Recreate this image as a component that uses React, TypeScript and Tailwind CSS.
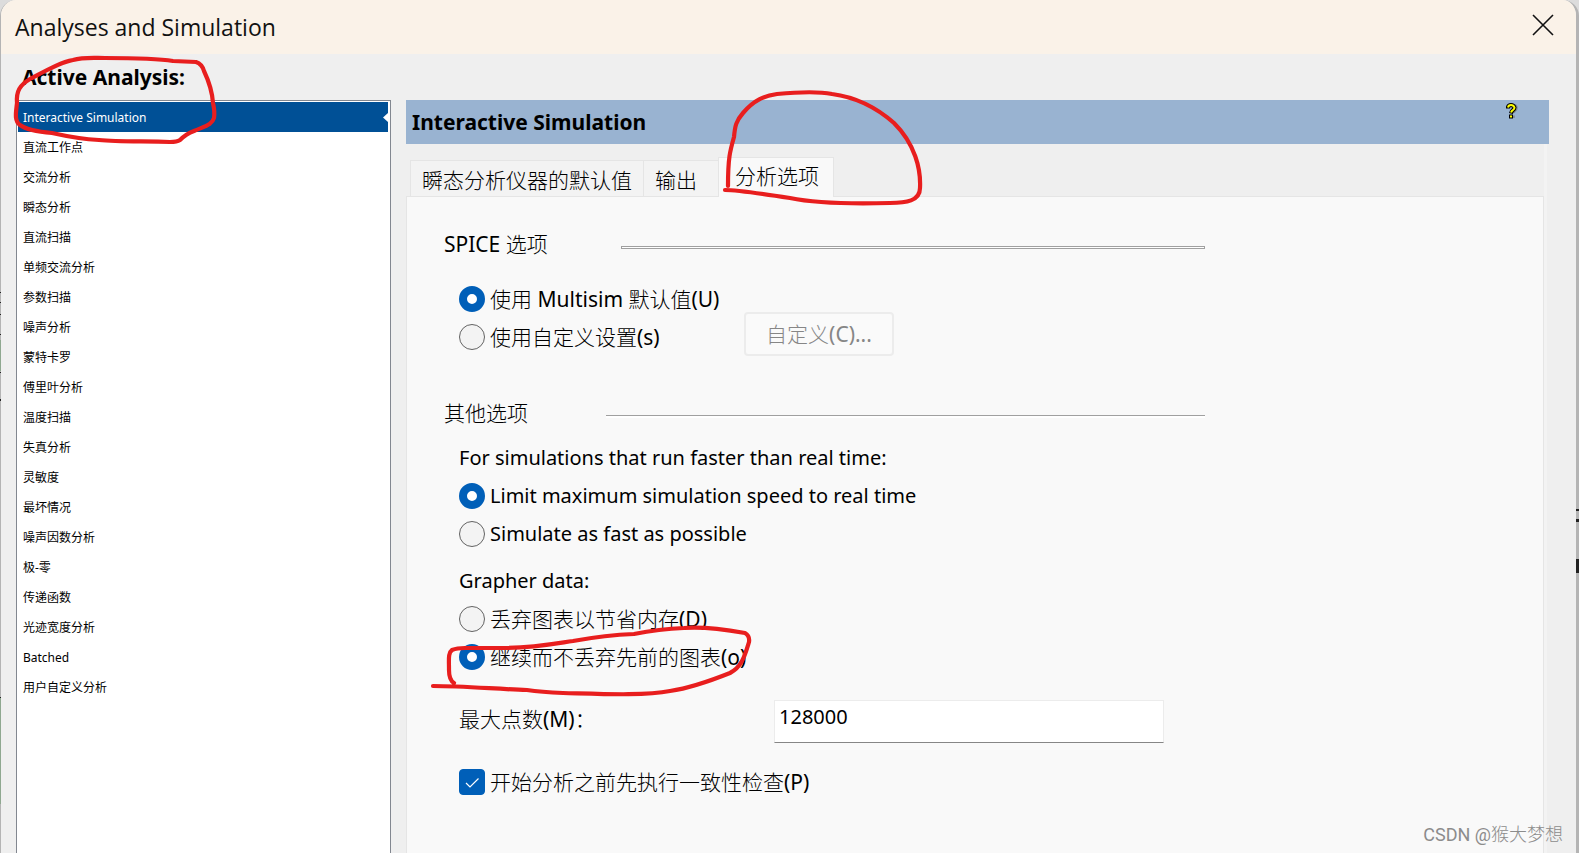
import { useState } from 'react';

const ANALYSES = [
  'Interactive Simulation',
  '直流工作点',
  '交流分析',
  '瞬态分析',
  '直流扫描',
  '单频交流分析',
  '参数扫描',
  '噪声分析',
  '蒙特卡罗',
  '傅里叶分析',
  '温度扫描',
  '失真分析',
  '灵敏度',
  '最坏情况',
  '噪声因数分析',
  '极-零',
  '传递函数',
  '光迹宽度分析',
  'Batched',
  '用户自定义分析'
];

const TABS = ['瞬态分析仪器的默认值', '输出', '分析选项'];

function RadioRow({
  name,
  label,
  checked,
  onSelect
}: {
  name: string;
  label: string;
  checked: boolean;
  onSelect: () => void;
}) {
  return (
    <label className="flex h-[38px] items-center gap-[5px] whitespace-nowrap">
      <input
        type="radio"
        name={name}
        checked={checked}
        onChange={onSelect}
        className="h-[26px] w-[26px] shrink-0 appearance-none rounded-full border border-[#636363] bg-[#f3f3f3] checked:border-8 checked:border-[#005fb8] checked:bg-white"
      />
      {label}
    </label>
  );
}

function HelpIcon() {
  return (
    <svg width="12" height="16" viewBox="0 0 12 16" fill="none" aria-hidden="true">
      <path d="M3 5V4Q3 2.5 6 2.5T9 5Q9 6.5 7.5 7.5T6 10M6 12.5V15" transform="translate(1 0)" stroke="#7d8790" strokeWidth="3.5" />
      <path d="M2 5.5V4Q2.500 2 5 2T8.500 4.500Q8.500 6 7 7T5 10.500M5 11.500V15.500" stroke="#000" strokeWidth="4" />
      <path d="M2 4.500Q2.500 2 5 2T8.500 4.500Q8.500 6 7 7T5 9.500M5 12.500V14.500" stroke="#ffff00" strokeWidth="2" />
    </svg>
  );
}

function PenMarks() {
  return (
    <svg
      className="pointer-events-none absolute left-0 top-0 h-[853px] w-[1579px]"
      viewBox="0 0 1579 853"
      fill="none"
      stroke="#e81e1e"
      strokeWidth="4.2"
      strokeLinecap="round"
      strokeLinejoin="round"
      aria-hidden="true"
    >
      <path d="M17 103C16 91 20 85 30 79C47 70 61 62 73 60C83 57 93 58 105 58C130 58 155 58 173 61L196 62Q202 64 204 71Q212 88 213 103Q215 112 214 118C212 125 205 126 194 131Q186 134 180 140Q177 142 170 142C147 141 119 142 99 140Q79 139 52 133Q28 131 20 125C14 121 16 112 17 103Z" />
      <path d="M728 186C728 158 730 151 734 137C735 126 736 121 743 113C754 100 764 96 777 94C798 92 817 91 832 94C855 97 877 108 894 123C915 144 921 169 920 188C920 201 906 203 890 203C854 204 814 203 790 198Q738 190 725 190" />
      <path d="M454 683Q449 680 449 670C449 659 448 653 452 650Q457 648 465 648L503 648C533 648 553 644 573 641Q606 635 634 634Q659 629 684 628C705 626 728 630 745 633Q750 636 749 642C745 655 742 667 730 673C710 681 690 688 670 691C645 696 602 694 563 693Q541 692 527 690C496 689 463 686 433 686" />
    </svg>
  );
}

// bits of the windows behind the dialog that peek out at its edges
function EdgeMarks() {
  return (
    <>
      <svg className="absolute left-0 top-0 h-[853px] w-px" viewBox="0 0 1 853" aria-hidden="true">
        <path d="M0 292h1v1H0zM0 302h1v1H0zM0 314h1v1H0zM0 334h1v1H0zM0 372h1v1H0zM0 399h1v2H0zM0 697h1v1H0z" fill="#222" />
        <path d="M0 340h1v31H0zM0 698h1v106H0z" fill="#8fa890" />
      </svg>
      <svg className="absolute right-0 top-0 h-[853px] w-[3px]" viewBox="0 0 3 853" aria-hidden="true">
        <path d="M0 509h3v2H0zM0 519h3v3H0zM0 559h3v14H0z" fill="#222" />
      </svg>
    </>
  );
}

export default function App() {
  const [analysis, setAnalysis] = useState(0);
  const [tab, setTab] = useState(2);
  const [spice, setSpice] = useState(0);
  const [speed, setSpeed] = useState(0);
  const [grapher, setGrapher] = useState(1);
  const [points, setPoints] = useState('128000');
  const [check, setCheck] = useState(true);

  return (
    <div className="relative flex min-h-screen bg-[#dcdcdc] font-['Noto_Sans','Noto_Sans_CJK_SC_Light','Noto_Sans_CJK_SC',sans-serif] text-[21px] leading-7 text-black">
      <main className="flex flex-1 flex-col overflow-hidden rounded-t-[16px] border-l border-r-3 border-[#b4b4b4] bg-[#efefef]">
        <header className="flex h-[54px] items-center justify-between bg-[#faf2e8] pl-[14px] pr-[22px]">
          <h1 className="font-['Open_Sans',sans-serif] text-[23px] text-[#111]">Analyses and Simulation</h1>
          <button type="button" aria-label="Close" className="-mt-1">
            <svg width="22" height="22" viewBox="0 0 22 22" stroke="#111" strokeWidth="1.6" fill="none">
              <path d="M1 1L21 21M21 1L1 21" />
            </svg>
          </button>
        </header>

        <div className="flex flex-1 flex-col pl-[15px] pr-[27px]">
          <h2 className="flex h-[46px] items-center pl-[6px] font-bold">Active Analysis:</h2>

          <div className="flex flex-1 gap-[15px]">
            <ul className="w-[375px] shrink-0 border border-b-0 border-[#828790] bg-white pl-px pr-[2px] pt-px font-['Noto_Sans','Noto_Sans_CJK_SC',sans-serif] text-xs">
              {ANALYSES.map((item, i) => (
                <li key={item}>
                  <button
                    type="button"
                    onClick={() => setAnalysis(i)}
                    className={
                      i === analysis
                        ? 'flex h-[30px] w-full items-center justify-between bg-[#005096] pl-[5px] pt-px text-left text-white'
                        : 'flex h-[30px] w-full items-center pl-[5px] pt-[2px] text-left'
                    }
                  >
                    {item}
                    {i === analysis ? (
                      <svg width="5" height="9" viewBox="0 0 5 9" fill="#fff" aria-hidden="true">
                        <path d="M5 0V9L0 4.5Z" />
                      </svg>
                    ) : null}
                  </button>
                </li>
              ))}
            </ul>

            <section className="flex flex-1 flex-col">
              <div className="flex h-[44px] shrink-0 items-center justify-between bg-[#99b3d1] pl-[6px] pr-[31px]">
                <h2 className="font-bold">Interactive Simulation</h2>
                <button type="button" aria-label="Help" className="self-start pt-[3px]">
                  <HelpIcon />
                </button>
              </div>

              <div className="mr-[2px] flex flex-1 flex-col border-r-3 border-[#f3f3f3]">
                <div className="mt-[13px] flex items-end pl-1">
                  {TABS.map((name, i) => (
                    <button
                      key={name}
                      type="button"
                      onClick={() => setTab(i)}
                      className={
                        i === tab
                          ? 'relative -mb-px h-[40px] border border-b-0 border-[#e5e5e5] bg-[#f9f9f9] pb-1 pl-4 pr-[14px]'
                          : 'h-[36px] border border-b-0 border-r-0 border-[#e5e5e5] bg-[#f3f3f3] pl-[11px] pr-[11px] pt-[2px] last:pr-5 nth-2:pr-[21px]'
                      }
                    >
                      {name}
                    </button>
                  ))}
                </div>

                <div className="flex-1 border border-b-0 border-[#e5e5e5] bg-[#f9f9f9] pl-[37px] pt-[31px]">
                  <div className="flex h-[38px] items-center">
                    <h3 className="w-[177px] pb-[6px]">SPICE 选项</h3>
                    <div className="h-[3px] w-[584px] border border-[#a0a0a0] bg-white" />
                  </div>

                  <div className="mt-[14px] flex items-end pl-[15px]">
                    <div className="w-[285px]">
                      <RadioRow name="spice" label="使用 Multisim 默认值(U)" checked={spice === 0} onSelect={() => setSpice(0)} />
                      <RadioRow name="spice" label="使用自定义设置(s)" checked={spice === 1} onSelect={() => setSpice(1)} />
                    </div>
                    <button
                      type="button"
                      disabled={spice === 0}
                      className="h-[44px] w-[150px] rounded border-2 border-[#ececec] bg-[#fafafa] disabled:text-[#868686]"
                    >
                      自定义(C)...
                    </button>
                  </div>

                  <div className="mt-[41px] flex h-[38px] items-center">
                    <h3 className="w-[162px] pb-[6px]">其他选项</h3>
                    <div className="h-[3px] w-[599px] border-t border-[#a0a0a0] bg-white" />
                  </div>

                  <div className="pl-[15px]">
                    <div className="text-xl">
                      <p className="mt-1 flex h-[38px] items-center">For simulations that run faster than real time:</p>
                      <RadioRow name="speed" label="Limit maximum simulation speed to real time" checked={speed === 0} onSelect={() => setSpeed(0)} />
                      <RadioRow name="speed" label="Simulate as fast as possible" checked={speed === 1} onSelect={() => setSpeed(1)} />
                      <p className="mt-[9px] flex h-[38px] items-center">Grapher data:</p>
                    </div>
                    <RadioRow name="grapher" label="丢弃图表以节省内存(D)" checked={grapher === 0} onSelect={() => setGrapher(0)} />
                    <RadioRow name="grapher" label="继续而不丢弃先前的图表(o)" checked={grapher === 1} onSelect={() => setGrapher(1)} />

                    <div className="mt-6 flex items-center">
                      <label htmlFor="points" className="w-[315px] pb-[6px]">
                        最大点数(M)：
                      </label>
                      <input
                        id="points"
                        type="text"
                        value={points}
                        onChange={(e) => setPoints(e.target.value)}
                        className="h-[43px] w-[390px] border border-[#ececec] border-b-[#868686] bg-white pb-[11px] pl-1 text-xl"
                      />
                    </div>

                    <label className="mt-5 flex h-[38px] items-center gap-[5px]">
                      <span className="grid h-[26px] w-[26px]">
                        <input
                          type="checkbox"
                          checked={check}
                          onChange={(e) => setCheck(e.target.checked)}
                          className="col-start-1 row-start-1 appearance-none rounded border border-[#636363] bg-[#f3f3f3] checked:border-[#005fb8] checked:bg-[#005fb8]"
                        />
                        {check ? (
                          <svg viewBox="0 0 26 26" className="pointer-events-none col-start-1 row-start-1" fill="none" stroke="#fff" strokeWidth="1.2" aria-hidden="true">
                            <path d="M7 14L11 18L19.500 9.500" />
                          </svg>
                        ) : null}
                      </span>
                      开始分析之前先执行一致性检查(P)
                    </label>
                  </div>
                </div>
              </div>
            </section>
          </div>
        </div>
      </main>

      <EdgeMarks />
      <PenMarks />
      <p className="absolute bottom-1 right-4 font-['Roboto','Noto_Sans_CJK_SC_Light','Noto_Sans_CJK_SC',sans-serif] text-lg text-[#8c8c8c]">
        CSDN @猴大梦想
      </p>
    </div>
  );
}
